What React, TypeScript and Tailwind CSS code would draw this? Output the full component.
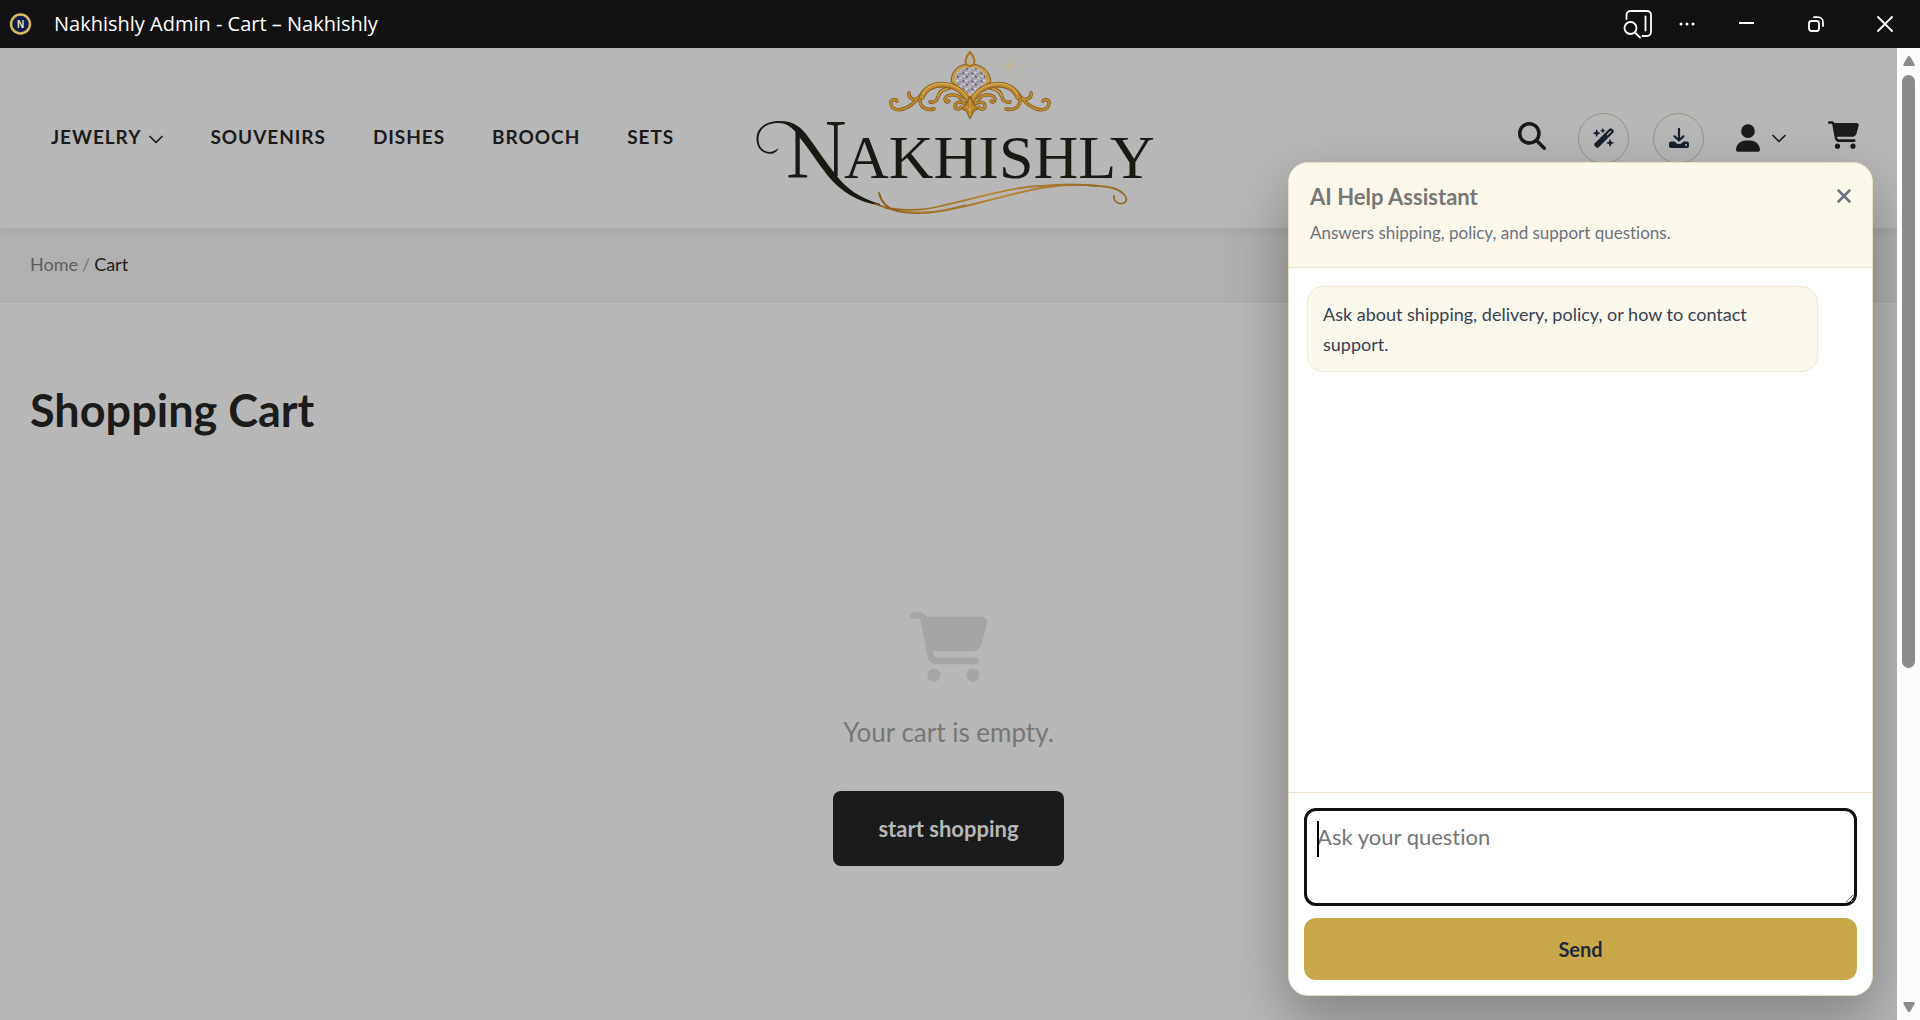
import { FaMagnifyingGlass, FaWandMagicSparkles, FaUser, FaCartShopping } from "react-icons/fa6"

const Chevron = ({ className }: { className: string }) => (
    <svg viewBox="0 0 14 9" className={className} fill="none" stroke="#1b1b1b" strokeWidth="1.700" strokeLinecap="round" strokeLinejoin="round">
        <path d="M1 1.500 7 7.500 13 1.500" />
    </svg>
)

const DownloadIcon = () => (
    <svg viewBox="0 0 20 20" className="size-5" fill="none" stroke="#17202c" strokeWidth="2.200" strokeLinecap="round" strokeLinejoin="round">
        <path d="M10 1v11M5.500 8.300l4.500 4.200 4.500-4.200" />
        <path
            fill="#17202c"
            stroke="none"
            fillRule="evenodd"
            d="M2.200 13.500H5.500l2 1.700c1.400 1.200 3.600 1.200 5 0l2-1.700h3.300c1.200 0 2.200.9 2.200 2v2.500c0 1.100-1 2-2.200 2H2.200C1 20 0 19.100 0 18v-2.500c0-1.100 1-2 2.200-2ZM17 15.900a1.100 1.100 0 1 0 0 2.200 1.100 1.100 0 0 0 0-2.200Z"
        />
    </svg>
)

const TitleBar = () => {
    return (
        <div className="flex h-12 shrink-0 items-center bg-[#111111] text-white">
            <svg viewBox="0 0 24 24" className="ml-2 size-6">
                <circle cx="12.500" cy="12" r="9.500" fill="#0e1d4b" stroke="#d9b95c" strokeWidth="2.500" />
                <text x="12.500" y="15.800" textAnchor="middle" fontSize="10" fontWeight="700" fill="#f0e3b8" fontFamily="Liberation Sans">N</text>
            </svg>
            <p className="ml-[22px] flex-1 font-['Open_Sans','Noto_Sans',sans-serif] text-xl">Nakhishly Admin - Cart – Nakhishly</p>
            <button aria-label="Search in sidebar" className="mr-[26px]">
                <svg viewBox="0 0 30 30" className="size-[30px]" fill="none" stroke="white" strokeWidth="1.800" strokeLinecap="round">
                    <path d="M3.500 10V6a4 4 0 0 1 4-4h16.500a4 4 0 0 1 4 4v17a4 4 0 0 1-4 4h-4.500" />
                    <path d="M22.500 7.500v14" />
                    <circle cx="7.500" cy="19" r="6" />
                    <path d="m12 23.500 5 5" />
                </svg>
            </button>
            <button aria-label="More" className="mr-11">
                <svg viewBox="0 0 16 4" className="h-1 w-4" fill="white">
                    <circle cx="2" cy="2" r="1.500" />
                    <circle cx="8" cy="2" r="1.500" />
                    <circle cx="14" cy="2" r="1.500" />
                </svg>
            </button>
            <button aria-label="Minimize" className="mr-[53px]">
                <svg viewBox="0 0 16 16" className="size-4" stroke="white" strokeWidth="2">
                    <path d="M0 7h15" />
                </svg>
            </button>
            <button aria-label="Restore" className="mr-[53px]">
                <svg viewBox="0 0 16 16" className="size-4" fill="none" stroke="white" strokeWidth="1.800" strokeLinecap="round">
                    <rect x="1" y="5" width="10" height="10" rx="2.500" />
                    <path d="M6 1.200h4a5 5 0 0 1 5 5V10" />
                </svg>
            </button>
            <button aria-label="Close" className="mr-[27px]">
                <svg viewBox="0 0 16 16" className="size-4" stroke="white" strokeWidth="1.800" strokeLinecap="round">
                    <path d="m1 1 14 14M15 1 1 15" />
                </svg>
            </button>
        </div>
    )
}

// one side of the tiara, mirrored for the other
const tiaraScrolls = [
    "M215 59C212 48 203 39 192 37 178 34 166 43 165 52c0 7 6 11 14 9",
    "M168 44c-4 6-8 11-15 15-7 4-16 4-17-3-1-4 4-6 6-3",
    "M163 50c-4 3-10 0-9-5",
    "M195 40c-8 1-11 4-12 9-1 4-4 6-8 5",
    "M206 51c-4-6-15-5-16 0 0 3 3 4 4 2",
    "M214 61c-3-8-13-9-14-3 0 4 5 4 6 1",
]

const TiaraHalf = () => (
    <g fill="none" strokeLinecap="round">
        {tiaraScrolls.map((d) => (
            <path key={d} d={d} stroke="#7c5416" strokeWidth="3.400" />
        ))}
        {tiaraScrolls.map((d) => (
            <path key={d} d={d} stroke="#bb8830" strokeWidth="2.200" />
        ))}
        <path stroke="#8a5e1b" strokeWidth="5.600" d="M212 51C207 43 201 38 191 37c-12-2-22 4-24 12" />
        <path stroke="#bf8d35" strokeWidth="4.200" d="M212 51C207 43 201 38 191 37c-12-2-22 4-24 12" />
        <path stroke="#deb763" strokeWidth="1" d="M212 49C207 42 201 37 191 36c-12-2-21 4-23 10M183 48c1-4 4-6 9-7" />
        <path stroke="#8a5e1b" strokeWidth="0.700" d="M210 51c-5-7-11-11-19-12-10-1-18 3-21 9" />
    </g>
)

const Logo = () => {
    return (
        <svg viewBox="0 0 400 180" className="h-[180px] w-[400px]" role="img" aria-label="Nakhishly">
            <defs>
                <linearGradient id="gold" x1="0" x2="1">
                    <stop offset="0" stopColor="#8b5d18" />
                    <stop offset="0.5" stopColor="#b88633" />
                    <stop offset="1" stopColor="#94682a" />
                </linearGradient>
                <pattern id="facets" width="9" height="8" patternUnits="userSpaceOnUse">
                    <rect width="9" height="8" fill="#aaa7b0" />
                    <path d="m0 0 3 1-2 2ZM4 3l3 2-3 1ZM7 1l1 1-2 1ZM1 6l2 0-1 1Z" fill="#665f78" />
                    <path d="m3 0 3 0-2 2ZM0 4l2-1 1 2ZM6 6l2-1v2Z" fill="#d8d5de" />
                </pattern>
                <clipPath id="stems">
                    <path d="M28 122h26v12H28ZM36 80h9v54h-9ZM72 66h22v12H72ZM79 66h9v62h-9Z" />
                </clipPath>
            </defs>
            <g stroke="#bfb28d" strokeWidth="0.700" opacity="0.700">
                <path d="M254 1v33M229 17h51M237 1l33 33M271 1l-32 31" />
            </g>
            <circle cx="254" cy="17" r="3" fill="#c4b791" opacity="0.800" />
            <path d="M196 34c0-12 8-18 19-18s20 6 21 18c-5 2-16 12-21 18-5-6-13-15-19-18Z" fill="#c39a50" stroke="#80571b" />
            <path d="M200 31c0-8 7-12 15-12s16 4 16 12c0 7-9 10-16 17-6-7-15-10-15-17Z" fill="url(#facets)" stroke="#d1ad68" />
            <path d="M215 4c-5 6-7 13 0 14 7-1 5-8 0-14Z" fill="#b7b2a3" stroke="#a97523" strokeWidth="2" />
            <TiaraHalf />
            <g transform="translate(430 0) scale(-1 1)">
                <TiaraHalf />
            </g>
            <path d="m215 71-4-8-4-2 4-5 4-8 4 8 4 5-4 2Z" fill="#b27c24" stroke="#77500f" strokeWidth="0.800" />
            <path d="M215 52v16M211 58l4 5 4-5" stroke="#deb763" strokeWidth="0.800" fill="none" />
            <g fill="#191813" fontFamily="Liberation Serif">
                <text x="31" y="130" fontSize="84" clipPath="url(#stems)">N</text>
                <text x="89" y="130" fontSize="62">AKHISHLY</text>
            </g>
            <path
                d="M1.500 91C1.500 78 13 73 25 73c14 0 21 6 29 17 9 12 17 25 27 37 10 13 23 23 44 29v1.500C101 154 86 143 73 128 63 115 54 101 45 90c-6-9-12-15-22-15-11 0-19.500 6-19.500 16 0 12 11 17 20 9-3 10-22 7-22-9Z"
                fill="#191813"
            />
            <g fill="none" stroke="url(#gold)" strokeLinecap="round">
                <path strokeWidth="1.800" d="M124 145c2 8 6 15 18 18 40 9 94-14 144-23 25-4 46-4 67-1 14 2 23 12 16 16-6 2-11-2-10-7" />
                <path strokeWidth="1.800" d="M120 156c20 8 46 7 66 2 36-8 70-19 100-20 20-2 40-2 56 0" />
                <path strokeWidth="1.200" d="M130 160c20 6 50 6 80-3" />
            </g>
        </svg>
    )
}

const Header = () => {
    return (
        <header className="relative z-10 flex h-[180px] items-center justify-between bg-[#b7b7b7] pl-[51px] pr-[38px] shadow-[0_2px_10px_rgba(0,0,0,0.08)]">
            <nav className="flex flex-1 items-center gap-[47px] pb-0.5 text-[19px] font-bold tracking-wider">
                <a href="#jewelry" className="flex items-center gap-2">JEWELRY <Chevron className="mt-1 h-[9px] w-3.5" /></a>
                <a href="#souvenirs">SOUVENIRS</a>
                <a href="#dishes">DISHES</a>
                <a href="#brooch">BROOCH</a>
                <a href="#sets">SETS</a>
            </nav>
            <Logo />
            <div className="flex flex-1 items-center justify-end">
                <button aria-label="Search" className="mr-8 pb-1"><FaMagnifyingGlass className="size-7" /></button>
                <button aria-label="Assistant" className="mr-6 flex size-[51px] items-center justify-center rounded-full border border-[#989080] text-[#17202c]">
                    <FaWandMagicSparkles className="h-5 w-[22px]" />
                </button>
                <button aria-label="Download" className="mr-8 flex size-[51px] items-center justify-center rounded-full border border-[#989080]">
                    <DownloadIcon />
                </button>
                <button aria-label="Account" className="mr-[42px] flex items-center gap-3">
                    <FaUser className="h-7 w-6" />
                    <Chevron className="h-[9px] w-3.5" />
                </button>
                <a href="#cart" aria-label="Cart" className="pb-1.5"><FaCartShopping className="h-7 w-[31px]" /></a>
            </div>
        </header>
    )
}

const ChatPanel = () => {
    return (
        <section aria-label="AI Help Assistant" className="absolute bottom-6 right-6 top-[114px] z-20 flex w-[585px] flex-col overflow-hidden rounded-[20px] border border-[#e9dfc2] bg-white shadow-[0_24px_60px_rgba(0,0,0,0.3)]">
            <div className="flex items-start justify-between border-b border-[#eee3c6] bg-[#fdf8ec] px-[21px] pb-5 pt-[18px]">
                <div>
                    <h2 className="text-[22px] font-bold leading-8 text-[#777777]">AI Help Assistant</h2>
                    <p className="mt-1.5 text-[17px] leading-7 text-[#6b7280]">Answers shipping, policy, and support questions.</p>
                </div>
                <button aria-label="Close assistant" className="mt-2">
                    <svg viewBox="0 0 14 14" className="size-3.5" stroke="#6b7280" strokeWidth="2.500" strokeLinecap="round">
                        <path d="m1.500 1.500 11 11M12.500 1.500l-11 11" />
                    </svg>
                </button>
            </div>
            <div className="flex-1 p-[18px]">
                <p className="mr-9 rounded-2xl border border-[#f1e8cd] bg-[#fbf8ee] px-[15px] py-3 text-lg leading-[30px] text-[#374151]">
                    Ask about shipping, delivery, policy, or how to contact support.
                </p>
            </div>
            <form className="flex flex-col gap-3 border-t border-[#eee3c6] p-[15px]">
                <div className="relative flex">
                    <textarea
                        aria-label="Ask your question"
                        placeholder="Ask your question"
                        className="h-[98px] flex-1 rounded-xl border-[3px] border-[#101010] px-2.5 py-2 text-[22px] leading-9 caret-transparent outline-none placeholder:text-[#757575]"
                    />
                    <span className="absolute left-[13px] top-[13px] h-9 w-0.5 bg-black" />
                </div>
                <button type="button" className="h-[62px] rounded-xl bg-[#c8a84b] text-xl font-bold text-[#1f2937]">Send</button>
            </form>
        </section>
    )
}

const ScrollArrow = ({ className }: { className: string }) => (
    <svg viewBox="0 0 12 10" className={className} fill="#8b8b8b">
        <path d="M6 0c.6 0 1 .4 1.300.8L11.500 8c.5 1 0 2-1 2h-9c-1 0-1.500-1-1-2L4.700.8C5 .4 5.400 0 6 0Z" />
    </svg>
)

const Scrollbar = () => (
    <div className="flex w-[23px] shrink-0 flex-col items-center bg-[#fcfcfc] py-2">
        <ScrollArrow className="h-2.5 w-3" />
        <div className="mt-[9px] flex w-[13px] flex-1 flex-col">
            <div className="h-[64%] rounded-full bg-[#8b8b8b]" />
        </div>
        <ScrollArrow className="h-2.5 w-3 rotate-180" />
    </div>
)

export default function App() {
    return (
        <div className="flex h-screen flex-col overflow-hidden font-['Lato','Open_Sans',sans-serif] text-[#1b1b1b] [font-variant-ligatures:none]">
            <TitleBar />
            <div className="flex min-h-0 flex-1">
                <div className="relative flex-1 overflow-hidden bg-[#b7b7b7]">
                    <Header />
                    <div className="flex h-[74px] items-center gap-1 border-b border-[#a5a5a5] bg-[#b0b0b0] px-[30px] pb-0.5 text-lg">
                        <a href="#home" className="text-[#5e5e5e]">Home</a>
                        <span className="text-[#777777]">/</span>
                        <span>Cart</span>
                    </div>
                    <main className="px-[30px] pt-[78px]">
                        <h1 className="text-[45px] font-bold leading-[60px]">Shopping Cart</h1>
                        <div className="flex flex-col items-center pt-[172px]">
                            <FaCartShopping className="h-[70px] w-[78px] text-[#a5a5a5]" />
                            <p className="mt-[30px] text-[26px] leading-10 text-[#777777]">Your cart is empty.</p>
                            <button className="mt-[39px] h-[75px] rounded-lg bg-[#1b1b1b] px-[45px] text-[22px] font-bold text-[#b7b7b7]">start shopping</button>
                        </div>
                    </main>
                    <ChatPanel />
                </div>
                <Scrollbar />
            </div>
        </div>
    )
}
